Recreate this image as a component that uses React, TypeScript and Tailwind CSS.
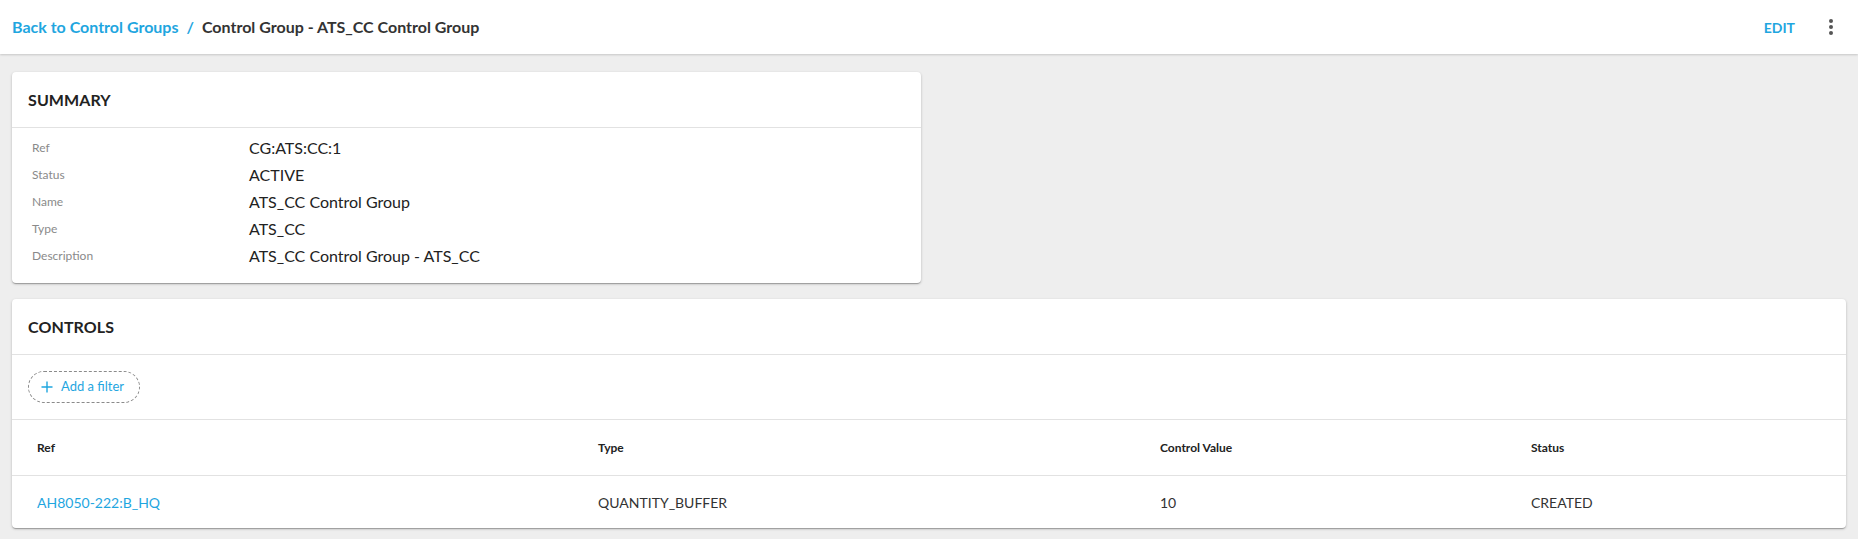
import React from "react";

const BLUE = "text-[#1fa6df]";

function Card({ title, children }: { title: string; children: React.ReactNode }) {
  return (
    <section className="bg-white rounded-[4px] shadow-[0_1px_3px_rgba(0,0,0,0.2),0_1px_1px_rgba(0,0,0,0.14),0_2px_1px_-1px_rgba(0,0,0,0.12)]">
      <div className="h-[56px] px-4 flex items-center border-b border-[#e2e2e2]">
        <h2 className="text-[16px] font-bold text-[#222] tracking-[0.1px]">{title}</h2>
      </div>
      {children}
    </section>
  );
}

const summary: [string, string][] = [
  ["Ref", "CG:ATS:CC:1"],
  ["Status", "ACTIVE"],
  ["Name", "ATS_CC Control Group"],
  ["Type", "ATS_CC"],
  ["Description", "ATS_CC Control Group - ATS_CC"],
];

export default function App() {
  return (
    <div className="min-h-screen bg-[#eeeeee] font-['Lato','Noto_Sans',sans-serif]">
      <header className="h-[54px] bg-white flex items-center justify-between pl-3 pr-[15px] shadow-[0_1px_2px_rgba(0,0,0,0.16)] relative z-10">
        <nav className="flex items-center text-[16px] font-bold">
          <a className={BLUE}>Back to Control Groups</a>
          <span className={`${BLUE} mx-[8px]`}>/</span>
          <span className="text-[#333]">Control Group - ATS_CC Control Group</span>
        </nav>
        <div className="flex items-center">
          <button className={`${BLUE} text-[14px] font-bold`}>EDIT</button>
          <button className="ml-[24px] w-[24px] h-[24px] flex flex-col items-center justify-center gap-[2px]">
            <span className="w-[4px] h-[4px] rounded-full bg-[#555]" />
            <span className="w-[4px] h-[4px] rounded-full bg-[#555]" />
            <span className="w-[4px] h-[4px] rounded-full bg-[#555]" />
          </button>
        </div>
      </header>

      <main className="px-3 pt-[18px] pb-2 flex flex-col gap-4">
        <div className="grid grid-cols-2 gap-4">
          <Card title="SUMMARY">
            <div className="px-5 pt-[6px] pb-[14px]">
              {summary.map(([k, v]) => (
                <div key={k} className="h-[27px] flex items-center">
                  <div className="w-[217px] text-[12px] text-[#8a8a8a]">{k}</div>
                  <div className="text-[16px] text-[#222]">{v}</div>
                </div>
              ))}
            </div>
          </Card>
          <div />
        </div>

        <Card title="CONTROLS">
          <div className="px-4 py-4 border-b border-[#e2e2e2]">
            <button className="h-[32px] w-[112px] rounded-full border border-dashed border-[#8a8a8a] flex items-center pl-[12px]">
              <svg width="12" height="12" viewBox="0 0 12 12" className="text-[#1fa6df]">
                <path d="M6 0.5V11.5M0.5 6H11.5" stroke="currentColor" strokeWidth="1.4" fill="none" />
              </svg>
              <span className={`${BLUE} text-[13px] ml-[8px]`}>Add a filter</span>
            </button>
          </div>
          <div className="grid grid-cols-[561px_562px_371px_1fr] h-[56px] items-center border-b border-[#e2e2e2] text-[12px] font-bold text-[#222]">
            <div className="pl-[25px]">Ref</div>
            <div className="pl-[25px]">Type</div>
            <div className="pl-[25px]">Control Value</div>
            <div className="pl-[25px]">Status</div>
          </div>
          <div className="grid grid-cols-[561px_562px_371px_1fr] h-[52px] items-center text-[14px] text-[#333]">
            <div className="pl-[25px]"><a className={BLUE}>AH8050-222:B_HQ</a></div>
            <div className="pl-[25px]">QUANTITY_BUFFER</div>
            <div className="pl-[25px]">10</div>
            <div className="pl-[25px]">CREATED</div>
          </div>
        </Card>
      </main>
    </div>
  );
}
